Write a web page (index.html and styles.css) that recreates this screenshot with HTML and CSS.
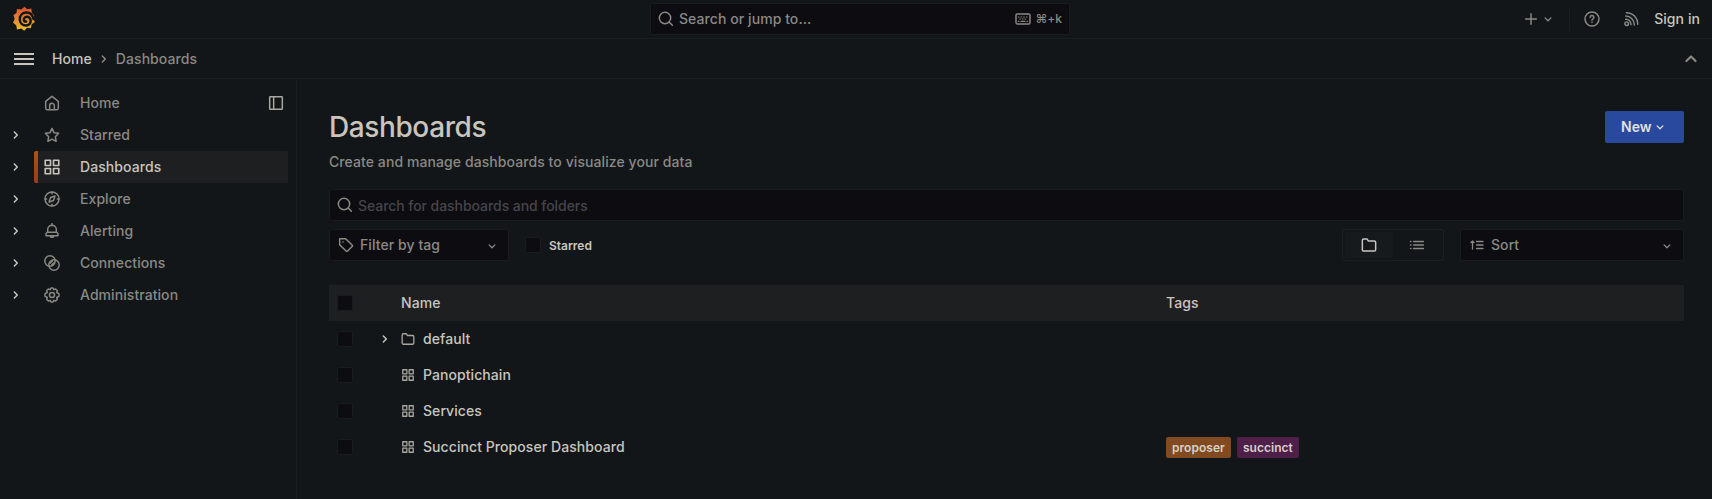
FILE: index.html
```html
<!DOCTYPE html>
<html lang="en">
<head>
<meta charset="utf-8">
<title>Dashboards - Grafana</title>
<link rel="stylesheet" href="styles.css">
</head>
<body>
<svg class="defs" width="0" height="0">
  <defs>
    <linearGradient id="flame" x1="0" y1="0" x2="0" y2="1"><stop offset="0" stop-color="#de5030"/><stop offset=".4" stop-color="#e37a30"/><stop offset="1" stop-color="#e8c52c"/></linearGradient>
    <symbol id="right" viewBox="0 0 24 24"><path d="m9.500 7.500 4.500 4.500-4.500 4.500"/></symbol>
    <symbol id="down" viewBox="0 0 24 24"><path d="m7 10 5 5 5-5"/></symbol>
    <symbol id="up" viewBox="0 0 24 24"><path d="m6.500 14.500 5.500-5.500 5.500 5.500"/></symbol>
    <symbol id="search" viewBox="0 0 24 24"><circle cx="10.500" cy="10.500" r="8.500"/><path d="m17 17 4.500 4.500"/></symbol>
    <symbol id="apps" viewBox="0 0 24 24"><path d="M3 3h7v7H3zM14 3h7v7h-7zM3 14h7v7H3zM14 14h7v7h-7z"/></symbol>
    <symbol id="folder" viewBox="0 0 24 24"><path d="M4 3h5.300l1.500 3H20a2 2 0 0 1 2 2v11a2 2 0 0 1-2 2H4a2 2 0 0 1-2-2V5a2 2 0 0 1 2-2z"/></symbol>
  </defs>
</svg>

<header class="topbar">
  <svg class="logo" viewBox="0 0 24 26">
    <path fill="url(#flame)" d="M12.500.8l2.700 2.500 4.100-.8.500 4.100 2.500 3.200-1 3 1.600 3.300-3.200 2.100-.9 4-3.800-.4-2.800 3-2.900-2.400-4.300 1-.7-4L1 16.600l1.700-3.500L1.500 9l3-2.100L5 3l4.300.5z"/>
    <path class="logo-spiral" d="M21.500 13C20.500 8.500 17.500 6.500 14 6.600 10 6.800 7.700 9.700 7.800 13.500c.1 3.600 2.800 6 6.100 6 3 0 4.900-2.200 4.800-4.800-.1-2.600-2-4-4-3.900-1.900.1-3 1.500-2.800 3 .1 1.200 1 1.900 2.200 1.800"/>
  </svg>
  <div class="command">
    <svg class="icon" width="16" height="16"><use href="#search"/></svg>
    <span class="command-text">Search or jump to...</span>
    <svg class="icon" width="16" height="16" viewBox="0 0 24 24"><rect x="1.500" y="4.500" width="21" height="15" rx="2"/><path class="keys" d="M5 9h1M9 9h1M13 9h1M17 9h1M7 12h1M11 12h1M15 12h1M5 15.500h1M9 15.500h6M18 15.500h1"/></svg>
    <span class="shortcut">⌘+k</span>
  </div>
  <div class="actions">
    <svg class="icon" width="16" height="16" viewBox="0 0 24 24"><path d="M12 4v16M4 12h16"/></svg>
    <svg class="icon caret" width="14" height="14"><use href="#down"/></svg>
    <span class="divider"></span>
    <svg class="icon" width="16" height="16" viewBox="0 0 24 24"><circle cx="12" cy="12" r="10.500"/><path d="M9.300 9.500a2.700 2.700 0 1 1 4 2.400c-1 .5-1.300.9-1.300 1.800M12 16.500v.5"/></svg>
    <svg class="icon news" width="16" height="16" viewBox="0 0 24 24"><circle cx="5.500" cy="19" r="2.700"/><path d="M4 12.500a7.500 7.500 0 0 1 8 8M4 7.500A13 13 0 0 1 17 21M5 2.500A17 17 0 0 1 22 20"/></svg>
    <span class="signin">Sign in</span>
  </div>
</header>

<nav class="crumbbar">
  <span class="menu"><i></i><i></i><i></i></span>
  <span class="crumb">Home</span>
  <svg class="icon crumb-sep" width="16" height="16"><use href="#right"/></svg>
  <span class="crumb current">Dashboards</span>
  <svg class="icon collapse" width="20" height="20"><use href="#up"/></svg>
</nav>

<div class="body">
  <aside class="sidebar">
    <div class="item">
      <span class="expand"></span>
      <div class="link"><svg class="icon" width="16" height="16" viewBox="0 0 24 24"><path d="M2.500 9.500 12 2l9.500 7.500V20a2 2 0 0 1-2 2h-15a2 2 0 0 1-2-2zM8.500 22v-6a3.500 3.500 0 0 1 7 0v6"/></svg><span>Home</span>
      <svg class="icon dock" width="16" height="16" viewBox="0 0 24 24"><rect x="2.500" y="2.500" width="19" height="19" rx="1"/><path d="M8.500 2.500v19"/></svg></div>
    </div>
    <div class="item">
      <svg class="icon expand" width="16" height="16"><use href="#right"/></svg>
      <div class="link"><svg class="icon" width="16" height="16" viewBox="0 0 24 24"><path d="m12 2 3 6.500 7 1-5 5 1.200 7-6.200-3.300-6.200 3.300 1.200-7-5-5 7-1z"/></svg><span>Starred</span></div>
    </div>
    <div class="item active">
      <svg class="icon expand" width="16" height="16"><use href="#right"/></svg>
      <div class="link"><svg class="icon" width="18" height="18"><use href="#apps"/></svg><span>Dashboards</span></div>
    </div>
    <div class="item">
      <svg class="icon expand" width="16" height="16"><use href="#right"/></svg>
      <div class="link"><svg class="icon" width="16" height="16" viewBox="0 0 24 24"><circle cx="12" cy="12" r="10.500"/><path d="m16.500 7.500-2.300 6.700-6.700 2.300 2.300-6.700zM12 1.500V4M12 20v2.500M1.500 12H4M20 12h2.500"/></svg><span>Explore</span></div>
    </div>
    <div class="item">
      <svg class="icon expand" width="16" height="16"><use href="#right"/></svg>
      <div class="link"><svg class="icon" width="16" height="16" viewBox="0 0 24 24"><path d="M12 1v3M5.500 14v-4a6.500 6.500 0 0 1 13 0v4M5 14h14l2 2v3H3v-3zM9 19.500a3.200 3.200 0 0 0 6 0"/></svg><span>Alerting</span></div>
    </div>
    <div class="item">
      <svg class="icon expand" width="16" height="16"><use href="#right"/></svg>
      <div class="link"><svg class="icon" width="16" height="16" viewBox="0 0 24 24"><circle cx="9" cy="9" r="7.800"/><circle cx="15" cy="15" r="7.800"/><path d="m9 12.500 3.500-3.500M11.500 15l3.500-3.500"/></svg><span>Connections</span></div>
    </div>
    <div class="item">
      <svg class="icon expand" width="16" height="16"><use href="#right"/></svg>
      <div class="link"><svg class="icon" width="16" height="16" viewBox="0 0 24 24"><path d="M9.300 4 10.500 1.500h3L14.700 4l2.800-1 2.500 2.500-1 2.800 3.500 1.700v4L19 15.700l1 2.800-2.500 2.500-2.800-1-1.200 2.500h-3L9.300 20l-2.800 1L4 18.500l1-2.800L1.500 14v-4L5 8.300 4 5.500 6.500 3z"/><circle cx="12" cy="12" r="3.800"/></svg><span>Administration</span></div>
    </div>
  </aside>

  <main class="page">
    <div class="page-head">
      <h1>Dashboards</h1>
      <button class="new">New<svg class="icon" width="14" height="14"><use href="#down"/></svg></button>
    </div>
    <p class="subtitle">Create and manage dashboards to visualize your data</p>
    <div class="field search">
      <svg class="icon" width="16" height="16"><use href="#search"/></svg>
      <span class="placeholder">Search for dashboards and folders</span>
    </div>
    <div class="filters">
      <div class="field tagfilter">
        <svg class="icon" width="16" height="16" viewBox="0 0 24 24"><path d="M2.500 2.500h9L21.500 12.500a1 1 0 0 1 0 1.500l-7.500 7.500a1 1 0 0 1-1.500 0L2.500 11.500z"/><path d="M7.500 7.500h.1"/></svg>
        <span>Filter by tag</span>
        <svg class="icon end" width="14" height="14"><use href="#down"/></svg>
      </div>
      <span class="check"></span><span class="check-label">Starred</span>
      <div class="views">
        <span class="view selected"><svg class="icon" width="16" height="16"><use href="#folder"/></svg></span>
        <span class="view"><svg class="icon" width="16" height="16" viewBox="0 0 16 16"><path d="M4.500 4.500h10M4.500 8h10M4.500 11.500h10M1.500 4.500h.5M1.500 8h.5M1.500 11.500h.5" class="thin"/></svg></span>
      </div>
      <div class="field sort">
        <svg class="icon" width="16" height="16" viewBox="0 0 16 16"><path d="M3.500 12V4M2 5.500 3.500 4 5 5.500M7.500 4.500h6.500M7.500 8h6.500M7.500 11.500h6.500" class="thin"/></svg>
        <span>Sort</span>
        <svg class="icon end" width="14" height="14"><use href="#down"/></svg>
      </div>
    </div>

    <div class="table">
      <div class="row header"><span class="check"></span><span></span><span>Name</span><span>Tags</span></div>
      <div class="row"><span class="check"></span><svg class="icon" width="16" height="16"><use href="#right"/></svg><span class="name"><svg class="icon" width="14" height="14"><use href="#folder"/></svg>default</span><span></span></div>
      <div class="row"><span class="check"></span><span></span><span class="name"><svg class="icon" width="14" height="14"><use href="#apps"/></svg>Panoptichain</span><span></span></div>
      <div class="row"><span class="check"></span><span></span><span class="name"><svg class="icon" width="14" height="14"><use href="#apps"/></svg>Services</span><span></span></div>
      <div class="row"><span class="check"></span><span></span><span class="name"><svg class="icon" width="14" height="14"><use href="#apps"/></svg>Succinct Proposer Dashboard</span><span class="tags"><b class="tag orange">proposer</b><b class="tag purple">succinct</b></span></div>
    </div>
  </main>
</div>
</body>
</html>
```
FILE: styles.css
```css
* { box-sizing: border-box; }
body {
  margin: 0;
  height: 499px;
  overflow: hidden;
  display: flex;
  flex-direction: column;
  background: #121619;
  color: #c9c5be;
  font: 400 14px/22px Inter, "Liberation Sans", sans-serif;
  letter-spacing: 0.07px;
  font-weight: 450;
}
.defs { position: absolute; }
.icon {
  display: block;
  flex: none;
  fill: none;
  stroke: currentColor;
  stroke-width: 2.2;
  stroke-linecap: round;
  stroke-linejoin: round;
}
.thin { stroke-width: 1.3; }
.keys { stroke-width: 1.8; }

.topbar {
  height: 39px;
  flex: none;
  display: grid;
  grid-template-columns: 638px 420px 1fr;
  align-items: center;
  border-bottom: 1px solid #1a1e20;
  padding: 0 12px;
  color: #8b8984;
}
.logo { width: 24px; height: 26px; }
.logo-spiral { fill: none; stroke: #121619; stroke-width: 2.5; stroke-linecap: round; }
.command {
  height: 32px;
  display: flex;
  align-items: center;
  padding: 0 7px;
  background: #0d0c11;
  border: 1px solid #191b1f;
  border-radius: 2px;
}
.command-text { margin-left: 5px; flex: 1; }
.shortcut { font-size: 12px; margin-left: 4px; font-weight: 500; letter-spacing: 0; }
.actions { display: flex; align-items: center; justify-content: flex-end; }
.caret { margin-left: 2px; }
.divider { width: 1px; height: 24px; background: #1a1e20; margin: 0 14px; }
.news { margin-left: 23px; }
.signin { margin-left: 15px; color: #c9c5be; font-weight: 500; }

.crumbbar {
  height: 40px;
  flex: none;
  display: flex;
  align-items: center;
  border-bottom: 1px solid #1a1e20;
  padding: 0 11px 0 14px;
}
.menu { display: flex; flex-direction: column; gap: 3px; width: 20px; margin-right: 18px; }
.menu i { height: 2px; background: #c9c5be; }
.crumb { font-weight: 500; }
.crumb-sep { margin: 1px 4px 0; color: #8b8984; }
.current { color: #8b8984; font-weight: 450; }
.collapse { margin-left: auto; color: #8b8984; stroke-width: 2.6; }

.body { flex: 1; display: flex; min-height: 0; }
.sidebar {
  width: 297px;
  flex: none;
  border-right: 1px solid #1a1e20;
  padding: 8px 8px 0;
}
.item { display: flex; align-items: center; height: 32px; color: #8b8984; }
.expand { width: 16px; margin-right: 10px; color: #c9c5be; }
.link {
  flex: 1;
  height: 32px;
  display: grid;
  grid-template-columns: 36px 1fr auto;
  align-items: center;
  padding-right: 4px;
}
.link > .icon:first-child { justify-self: center; }
.link span { margin-left: 10px; }
.dock { color: #aaa7a1; }
.active .link {
  background: linear-gradient(#ad5418, #9c3a18) left / 4px 100% no-repeat #1e1f21;
  border-radius: 2px;
  color: #c9c5be;
  font-weight: 500;
}

.page { flex: 1; padding: 32px 28px 0 32px; }
.page-head { display: flex; justify-content: space-between; height: 32px; align-items: center; }
h1 { margin: 0; font-size: 28px; line-height: 32px; font-weight: 450; letter-spacing: -0.4px; }
.new {
  display: flex;
  align-items: center;
  gap: 2px;
  width: 79px;
  height: 32px;
  padding: 0 16px 1px;
  border: 0;
  border-radius: 2px;
  background: #28499d;
  color: #e0e0e4;
  font: 600 14px Inter, sans-serif;
}
.subtitle { margin: 8px 0 16px; color: #8b8984; letter-spacing: 0.08px; }
.field {
  height: 32px;
  display: flex;
  align-items: center;
  padding: 0 8px;
  background: #0d0c11;
  border: 1px solid #191b1f;
  border-radius: 2px;
  color: #8b8984;
}
.search { padding-left: 7px; }
.placeholder { margin-left: 5px; color: #454549; padding-top: 1px; letter-spacing: -0.06px; }
.filters { display: flex; align-items: center; margin-top: 8px; height: 32px; }
.tagfilter { width: 180px; gap: 6px; margin-right: 16px; }
.end { margin: 1px 1px 0 auto; }
.check {
  width: 16px;
  height: 16px;
  background: #0d0c11;
  border: 1px solid #191b1f;
  border-radius: 2px;
}
.check-label { margin-left: 8px; padding-top: 1px; font-size: 12px; font-weight: 600; letter-spacing: 0; }
.views {
  margin-left: auto;
  width: 102px;
  height: 32px;
  display: flex;
  padding: 2px;
  border: 1px solid #1c2023;
  border-radius: 2px;
  color: #8b8984;
}
.view { flex: 1; display: grid; place-items: center; }
.selected { background: #171a1d; color: #c9c5be; }
.sort { width: 224px; margin-left: 16px; gap: 6px; }

.table { margin-top: 24px; }
.row {
  display: grid;
  grid-template-columns: 40px 32px 765px 1fr;
  align-items: center;
  height: 36px;
}
.row > .check { margin-left: 8px; }
.row > .icon { margin-left: 8px; }
.header { background: #1e1f21; font-weight: 500; }
.name { display: flex; align-items: center; gap: 8px; }
.name .icon { color: #aaa7a1; }
.tags { display: flex; gap: 6px; }
.tag {
  font-size: 12px;
  line-height: 21px;
  font-weight: 600;
  letter-spacing: 0.04px;
  padding: 0 6px;
  border-radius: 2px;
  color: #d6d0cb;
}
.orange { background: #824a20; }
.purple { background: #4e1f49; }
```
